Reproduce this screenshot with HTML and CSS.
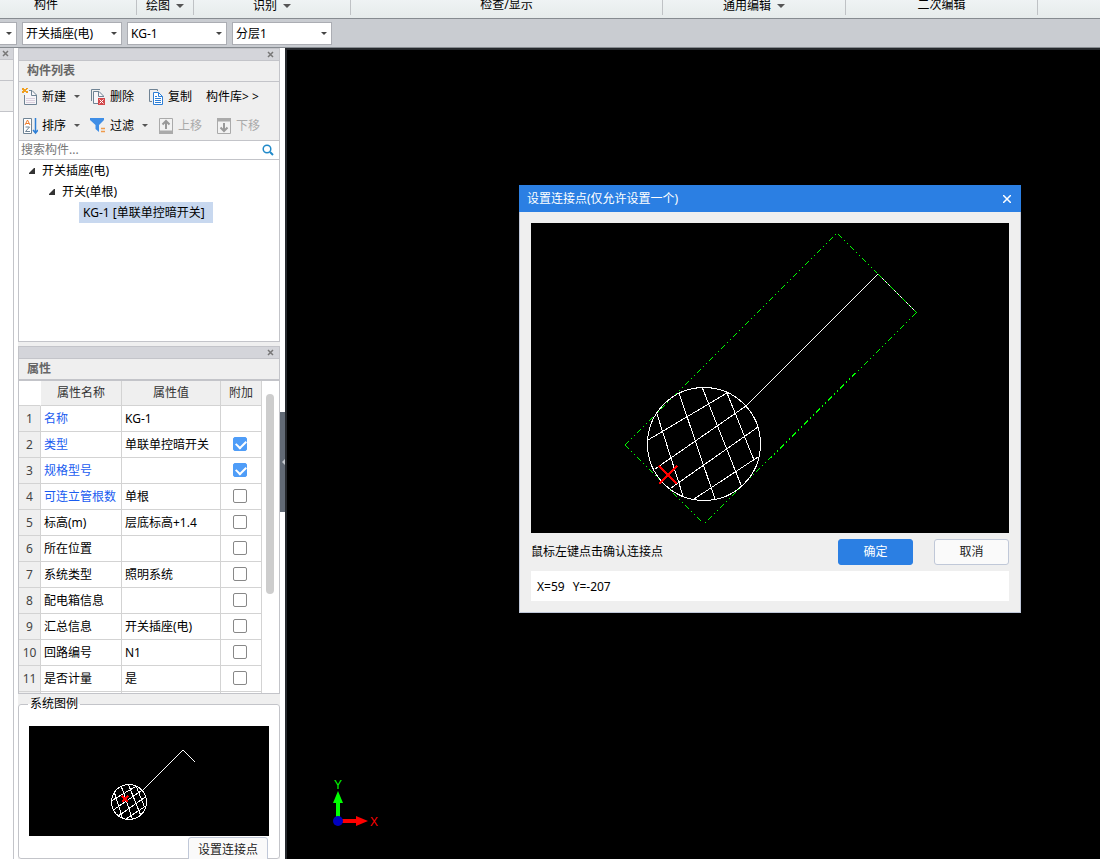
FILE: index.html
```
<!DOCTYPE html>
<html lang="zh-CN">
<head>
    <meta charset="UTF-8">
    <meta name="viewport" content="width=device-width, initial-scale=1.0">
    <title>设置连接点</title>
    <link rel="stylesheet" href="styles.css">
</head>
<body>
    <nav class="ribbon">
        <div class="group g-component">构件</div>
        <button class="group g-draw drop">绘图</button>
        <button class="group g-identify drop">识别</button>
        <div class="group g-check">检查/显示</div>
        <button class="group g-edit drop">通用编辑</button>
        <div class="group g-second">二次编辑</div>
    </nav>

    <div class="combobar">
        <span class="combo combo-cut"><select aria-label="专业"><option></option></select></span>
        <span class="combo"><select aria-label="构件类型"><option>开关插座(电)</option></select></span>
        <span class="combo"><select aria-label="构件"><option>KG-1</option></select></span>
        <span class="combo"><select aria-label="分层"><option>分层1</option></select></span>
    </div>

    <div class="main">
        <aside class="nav-edge">
            <div class="strip"><button class="x" aria-label="关闭"><svg width="7" height="7"><path d="M1 1L6 6M6 1L1 6"/></svg></button></div>
            <div class="panel-title"></div>
            <div class="edge-tab"></div>
        </aside>

        <div class="side">
            <section class="panel list-panel">
                <div class="strip"><button class="x" aria-label="关闭"><svg width="7" height="7"><path d="M1 1L6 6M6 1L1 6"/></svg></button></div>
                <h2 class="panel-title">构件列表</h2>
                <div class="tools">
                    <div class="tool-row">
                        <button class="tool drop t-wide">
                            <svg width="16" height="18" viewBox="0 0 16 18"><path d="M7 2.500H10L14.500 7V16.500H2.500V7" fill="#f7f5f8" stroke="#6f8394"/><path d="M9.500 2.500V7.500H14" fill="none" stroke="#6f8394"/><path d="M4 10.500H13M4 12.500H13M4 14.500H13" stroke="#d9cfdd"/><path d="M0 0H2V1H4V0H6V1H5V2H4V3H6V5H4V4H2V5H0V3H1V2H0Z" fill="#f0a020"/></svg>新建</button>
                        <button class="tool t-mid">
                            <svg width="16" height="18" viewBox="0 0 16 18"><path d="M1.500 13V1.500H10" fill="none" stroke="#6f8394"/><path d="M8 15.500H3.500V3.500H9L13.500 8V9" fill="#f7f5f8" stroke="#6f8394"/><path d="M8.500 4V8.500H13" fill="none" stroke="#6f8394"/><path d="M8 10H15V17H8Z" fill="#d2484b"/><path d="M9.500 11.500L13.500 15.500M13.500 11.500L9.500 15.500" stroke="#fff"/></svg>删除</button>
                        <button class="tool t-mid">
                            <svg width="16" height="18" viewBox="0 0 16 18"><path d="M4 13.500H1.500V1.500H9.500V3" fill="none" stroke="#6f8394"/><path d="M5.500 4.500H10.500L14.500 8.500V16.500H5.500Z" fill="#fff" stroke="#2e7fd6"/><path d="M10.500 4.500V8.500H14.500M7 8.500H9M7 10.500H13M7 12.500H13M7 14.500H13" fill="none" stroke="#2e7fd6"/></svg>复制</button>
                        <button class="tool">构件库&gt; &gt;</button>
                    </div>
                    <div class="tool-row">
                        <button class="tool drop t-wide">
                            <svg width="16" height="18" viewBox="0 0 16 18"><path d="M1.500 1.500H9.500V16.500H1.500Z" fill="#fff" stroke="#6f8394"/><path d="M3 8L5.500 3L8 8M4 6.500H7" fill="none" stroke="#ef7d2c"/><path d="M3.500 10H7.500L3.500 14.500H8" fill="none" stroke="#6f8394"/><path d="M13.500 1V15M11 13L13.500 16L16 13" fill="none" stroke="#2e7fd6" stroke-width="1.500"/></svg>排序</button>
                        <button class="tool drop t-wide">
                            <svg width="16" height="18" viewBox="0 0 16 18"><path d="M0 1H14V3L9 8V15L5.500 12V8L0 3Z" fill="#3f8ee6"/><path d="M11 11.500H15M11 14.500H15" stroke="#ef9a4c" stroke-width="1.500"/></svg>过滤</button>
                        <button class="tool t-mid" disabled>
                            <svg width="16" height="18" viewBox="0 0 16 18"><path d="M1.500 1.500H14.500V16H1.500Z" fill="#f2f2f2" stroke="#aaa"/><path d="M1 13.500H15V17H1Z" fill="#aaa"/><path d="M8 12V4M4.500 7.500L8 4L11.500 7.500" fill="none" stroke="#999" stroke-width="2"/></svg>上移</button>
                        <button class="tool t-mid" disabled>
                            <svg width="16" height="18" viewBox="0 0 16 18"><path d="M1.500 1.500H14.500V16.500H1.500Z" fill="#f2f2f2" stroke="#aaa"/><path d="M1 1H15V4.500H1Z" fill="#aaa"/><path d="M8 6V14M4.500 10.500L8 14L11.500 10.500" fill="none" stroke="#999" stroke-width="2"/></svg>下移</button>
                    </div>
                </div>
                <div class="search">
                    <input type="text" placeholder="搜索构件..." aria-label="搜索构件">
                    <svg width="12" height="12" viewBox="0 0 12 12"><circle cx="5" cy="5" r="3.800" fill="none" stroke="#2089c9" stroke-width="1.500"/><path d="M8 8L11 11" stroke="#2089c9" stroke-width="2"/></svg>
                </div>
                <ul class="tree">
                    <li class="lv1"><svg width="6" height="6"><path d="M5 0H6V6H0V5Z" fill="#333"/></svg>开关插座(电)</li>
                    <li class="lv2"><svg width="6" height="6"><path d="M5 0H6V6H0V5Z" fill="#333"/></svg>开关(单根)</li>
                    <li class="lv3"><span class="selected">KG-1 [单联单控暗开关]</span></li>
                </ul>
            </section>

            <section class="panel prop-panel">
                <div class="strip"><button class="x" aria-label="关闭"><svg width="7" height="7"><path d="M1 1L6 6M6 1L1 6"/></svg></button></div>
                <h2 class="panel-title">属性</h2>
                <div class="prop-body">
                    <table class="props">
                        <thead>
                            <tr><td class="num"></td><th class="name">属性名称</th><th class="value">属性值</th><th class="extra">附加</th></tr>
                        </thead>
                        <tbody>
                            <tr><td class="num">1</td><td class="blue">名称</td><td>KG-1</td><td></td></tr>
                            <tr><td class="num">2</td><td class="blue">类型</td><td>单联单控暗开关</td><td class="ck"><input type="checkbox" aria-label="类型" checked></td></tr>
                            <tr><td class="num">3</td><td class="blue">规格型号</td><td></td><td class="ck"><input type="checkbox" aria-label="规格型号" checked></td></tr>
                            <tr><td class="num">4</td><td class="blue">可连立管根数</td><td>单根</td><td class="ck"><input type="checkbox" aria-label="可连立管根数"></td></tr>
                            <tr><td class="num">5</td><td>标高(m)</td><td>层底标高+1.4</td><td class="ck"><input type="checkbox" aria-label="标高"></td></tr>
                            <tr><td class="num">6</td><td>所在位置</td><td></td><td class="ck"><input type="checkbox" aria-label="所在位置"></td></tr>
                            <tr><td class="num">7</td><td>系统类型</td><td>照明系统</td><td class="ck"><input type="checkbox" aria-label="系统类型"></td></tr>
                            <tr><td class="num">8</td><td>配电箱信息</td><td></td><td class="ck"><input type="checkbox" aria-label="配电箱信息"></td></tr>
                            <tr><td class="num">9</td><td>汇总信息</td><td>开关插座(电)</td><td class="ck"><input type="checkbox" aria-label="汇总信息"></td></tr>
                            <tr><td class="num">10</td><td>回路编号</td><td>N1</td><td class="ck"><input type="checkbox" aria-label="回路编号"></td></tr>
                            <tr><td class="num">11</td><td>是否计量</td><td>是</td><td class="ck"><input type="checkbox" aria-label="是否计量"></td></tr>
                            <tr><td class="num"></td><td></td><td></td><td></td></tr>
                        </tbody>
                    </table>
                    <div class="scroll"><div class="thumb"></div></div>
                </div>
            </section>

            <fieldset class="legend-box">
                <legend>系统图例</legend>
                <svg class="mini" viewBox="0 0 240 110">
                    <use href="#lamp" transform="translate(100 76) scale(.31) translate(-173 -221)"/>
                    <path class="white" d="M114 64L154 24L166 36"/>
                    <path class="red" d="M93 70L99 76M99 70L93 76"/>
                </svg>
                <button class="btn btn-point">设置连接点</button>
            </fieldset>
        </div>

        <div class="splitter"><div class="grip"></div></div>

        <main class="canvas">
            <svg class="axis" width="60" height="52" viewBox="0 0 60 52">
                <path d="M13 42V22" stroke="#0f0" stroke-width="4"/>
                <path d="M13 13L18 25H8Z" fill="#0f0"/>
                <path d="M13 43H33" stroke="#f00" stroke-width="4"/>
                <path d="M43 43L31 48V38Z" fill="#f00"/>
                <circle cx="13" cy="43" r="5" fill="#0000c0"/>
                <text x="13" y="11" fill="#0f0">Y</text>
                <text x="49" y="48" fill="#f00">X</text>
            </svg>

            <div class="dialog" role="dialog" aria-label="设置连接点">
                <div class="dialog-title">
                    <span>设置连接点(仅允许设置一个)</span>
                    <button class="dialog-close" aria-label="关闭"><svg width="8" height="8"><path d="M0 0L8 8M8 0L0 8"/></svg></button>
                </div>
                <div class="dialog-body">
                    <svg class="preview" viewBox="0 0 478 310">
                        <path class="dash" d="M94 222L306 10"/>
                        <path class="dash" d="M385 90L173 301"/>
                        <path class="dash" d="M94 222L172 300"/>
                        <path class="dash" d="M307 11L346 50"/>
                        <g id="lamp" class="white">
                            <circle cx="173" cy="221" r="56.500"/>
                            <path d="M126 191L152 273M148 170L184 276M171 164L210 262M196 170L223 237"/>
                            <path d="M117 217L196 170M124 246L215 183M140 265L227 204M163 276L227 234"/>
                        </g>
                        <path class="white" d="M215 183L347 51L386 90"/>
                        <path class="dash" d="M347 51L386 90"/>
                        <path class="red" d="M128 243L146 261M146 243L128 261"/>
                    </svg>
                    <div class="dialog-actions">
                        <span class="hint">鼠标左键点击确认连接点</span>
                        <button class="btn btn-ok">确定</button>
                        <button class="btn">取消</button>
                    </div>
                    <output class="coords"><span>X=59</span><span>Y=-207</span></output>
                </div>
            </div>
        </main>
    </div>
</body>
</html>
```
FILE: styles.css
```
*{
    box-sizing: border-box;
}
body{
    margin: 0;
    height: 100vh;
    display: flex;
    flex-direction: column;
    overflow: hidden;
    background-color: #fff;
    color: #000;
    font: 12px/18px "Noto Sans", "Noto Sans CJK SC", sans-serif;
}
button, input, select{
    font: inherit;
    color: inherit;
}
button{
    border: 0;
    padding: 0;
    background: none;
}
svg{
    flex: none;
}

/* ribbon */
.ribbon{
    flex: none;
    display: flex;
    align-items: flex-start;
    height: 19px;
    overflow: hidden;
    background: linear-gradient(#eff3f4, #e6ebeb);
    border-bottom: 1px solid #868b90;
}
.group{
    flex: none;
    display: flex;
    justify-content: center;
    align-items: center;
    height: 15px;
    padding-bottom: 6px;
    border-right: 1px solid #bfc2c5;
}
.group.drop{
    padding-bottom: 3px;
}
.drop::after{
    content: "";
    border: 4px solid transparent;
    border-top-color: #555;
    border-bottom: 0;
    margin-left: 6px;
}
.g-component{
    width: 137px;
    padding-right: 44px;
}
.g-draw{
    width: 57px;
}
.g-identify{
    width: 157px;
}
.g-check{
    width: 312px;
}
.g-edit{
    width: 183px;
}
.g-second{
    width: 192px;
}

/* combos */
.combobar{
    flex: none;
    display: flex;
    gap: 5px;
    height: 29px;
    padding-top: 3px;
    background-color: #c9ccd1;
    border-bottom: 1px solid #868b90;
}
.combo{
    position: relative;
    flex: none;
    width: 100px;
    height: 23px;
}
.combo-cut{
    margin-left: -83px;
}
.combo select{
    appearance: none;
    width: 100%;
    height: 100%;
    padding: 0 16px 0 3px;
    border: 1px solid #abadb3;
    border-radius: 0;
    background-color: #fff;
}
.combo::after{
    content: "";
    position: absolute;
    top: 10px;
    right: 5px;
    border: 3px solid transparent;
    border-top-color: #444;
    border-bottom: 0;
    pointer-events: none;
}

/* panels */
.main{
    flex: 1;
    min-height: 0;
    display: flex;
}
.nav-edge{
    flex: none;
    width: 14px;
    border-right: 1px solid #c3c4c9;
    margin-right: 4px;
}
.edge-tab{
    height: 31px;
    background-color: #efefef;
    border-bottom: 1px solid #c3c4c9;
}
.side{
    flex: none;
    width: 262px;
    display: flex;
    flex-direction: column;
    background-color: #efefef;
}
.panel{
    border: 1px solid #c3c4c9;
    background-color: #fff;
}
.strip{
    display: flex;
    justify-content: flex-end;
    align-items: center;
    height: 12px;
    padding-right: 5px;
    background-color: #d4d5da;
    border-bottom: 1px solid #c3c4c9;
}
.x{
    display: flex;
}
.x svg{
    stroke: #777;
    stroke-width: 1.5;
}
.nav-edge .strip{
    padding-right: 4px;
}
.panel-title{
    margin: 0;
    height: 21px;
    padding-left: 8px;
    background-color: #efefef;
    border-bottom: 1px solid #c3c4c9;
    color: #666;
    font-size: 12px;
    font-weight: 600;
    line-height: 20px;
}
.list-panel{
    height: 294px;
}
.tools{
    height: 59px;
    background-color: #efefef;
    border-bottom: 1px solid #c3c4c9;
}
.tool-row{
    display: flex;
    height: 29px;
    padding-left: 3px;
}
.tool{
    display: flex;
    align-items: center;
    gap: 4px;
}
.tool:disabled{
    color: #aaa;
}
.tool.drop::after{
    border-width: 3px 3px 0;
    margin-left: 4px;
}
.t-wide{
    width: 68px;
}
.t-mid{
    width: 58px;
}
.search{
    display: flex;
    align-items: center;
    height: 19px;
    padding: 0 5px 0 2px;
    border-bottom: 1px solid #c3c4c9;
}
.search input{
    flex: 1;
    min-width: 0;
    height: 18px;
    padding: 0;
    border: 0;
    outline: 0;
}
.search input::placeholder{
    color: #777;
}
.tree{
    margin: 0;
    padding: 0;
    list-style: none;
}
.tree li{
    display: flex;
    align-items: center;
    gap: 7px;
    height: 21px;
}
.tree .lv1{
    padding-left: 10px;
}
.tree .lv2{
    padding-left: 30px;
}
.tree .lv3{
    padding-left: 60px;
}
.selected{
    padding: 0 8px 0 4px;
    line-height: 21px;
    background-color: #c8d8ef;
}

/* properties */
.prop-panel{
    height: 348px;
    margin-top: 4px;
    overflow: hidden;
}
.prop-panel .panel-title{
    height: 22px;
    border-bottom-width: 2px;
}
.prop-body{
    display: flex;
}
.props{
    width: 243px;
    table-layout: fixed;
    border-collapse: separate;
    border-spacing: 0;
}
.props td, .props th{
    height: 26px;
    padding: 0 0 0 3px;
    border-right: 1px solid #d3d3d3;
    border-bottom: 1px solid #d3d3d3;
    overflow: hidden;
    white-space: nowrap;
}
.props thead td, .props thead th{
    height: 25px;
}
.props th{
    padding: 0;
    background-color: #efefef;
    color: #333;
    font-weight: normal;
}
.props .num{
    width: 22px;
    padding: 0;
    background-color: #efefef;
    color: #444;
    text-align: center;
}
.props thead .num{
    background-color: #fff;
    border-right-color: #fff;
}
.props .name{
    width: 81px;
}
.props .value{
    width: 99px;
}
.props .blue{
    color: #1a5cf0;
}
.props .ck{
    padding: 0 2px 2px 0;
}
.ck input{
    appearance: none;
    display: block;
    width: 14px;
    height: 14px;
    margin: 0 auto;
    border: 1px solid #888;
    border-radius: 2px;
    background-color: #fff;
}
.ck input:checked{
    border-color: #4f9df8;
    background-color: #4f9df8;
}
.ck input:checked::before{
    content: "";
    display: block;
    width: 8px;
    height: 5px;
    margin: 2px;
    border: solid #fff;
    border-width: 0 0 2px 2px;
    transform: rotate(-45deg);
}
.scroll{
    flex: 1;
    padding: 13px 5px 0 4px;
}
.thumb{
    width: 8px;
    height: 200px;
    border-radius: 4px;
    background-color: #cdcdcd;
}

/* legend preview */
.legend-box{
    flex: 1;
    min-height: 0;
    min-width: 0;
    margin: 0;
    padding: 12px 10px 0;
    border: 1px solid #c3c4c9;
    border-radius: 3px;
    background-color: #fff;
}
.legend-box legend{
    padding: 0 2px;
    margin-left: -1px;
    line-height: 20px;
}
.mini, .preview{
    display: block;
    width: 100%;
    background-color: #000;
    shape-rendering: crispEdges;
}
.white, .red, .dash{
    fill: none;
    stroke: #fff;
}
.white *{
    vector-effect: non-scaling-stroke;
}
.red{
    stroke: #f00;
    stroke-width: 2;
}
.dash{
    stroke: #0f0;
    stroke-dasharray: 5.6 2.8 1.4 2.8 1.4 2.97;
}
.btn{
    width: 75px;
    height: 26px;
    border: 1px solid #c0c8d8;
    border-radius: 3px;
    background-color: #fafafa;
    color: #222;
}
.btn-point{
    display: block;
    width: 80px;
    margin: 1px 1px 0 auto;
}

.splitter{
    flex: none;
    width: 5px;
    padding-top: 364px;
}
.grip{
    display: flex;
    align-items: center;
    justify-content: flex-end;
    height: 100px;
    background-color: #626a75;
}
.grip::before{
    content: "";
    border: 3px solid transparent;
    border-right-color: #c5c9cf;
    border-left: 0;
}

/* drawing area */
.canvas{
    position: relative;
    flex: 1;
    min-width: 0;
    background-color: #000;
    border: solid #25282c;
    border-width: 2px 0 0 2px;
}
.axis{
    position: absolute;
    left: 38px;
    bottom: 29px;
}
.axis text{
    font: 12px "Liberation Sans", sans-serif;
    text-anchor: middle;
}
.dialog{
    position: absolute;
    top: 135px;
    left: 232px;
    width: 502px;
    background-color: #efefef;
    border: 1px solid #c0c8d8;
    border-top: 0;
}
.dialog-title{
    display: flex;
    justify-content: space-between;
    align-items: center;
    height: 27px;
    margin: 0 -1px;
    padding: 0 10px 0 8px;
    background-color: #2b7fe3;
    color: #fff;
}
.dialog-close{
    display: flex;
}
.dialog-close svg{
    stroke: #fff;
    stroke-width: 1.5;
}
.dialog-body{
    padding: 11px;
}
.dialog-actions{
    display: flex;
    align-items: center;
    gap: 21px;
    padding: 6px 0;
}
.hint{
    flex: 1;
}
.btn-ok{
    border-color: #2b7fe3;
    background-color: #2b7fe3;
    color: #fff;
}
.coords{
    display: flex;
    gap: 8px;
    padding: 7px 6px 5px;
    background-color: #fff;
}
```
